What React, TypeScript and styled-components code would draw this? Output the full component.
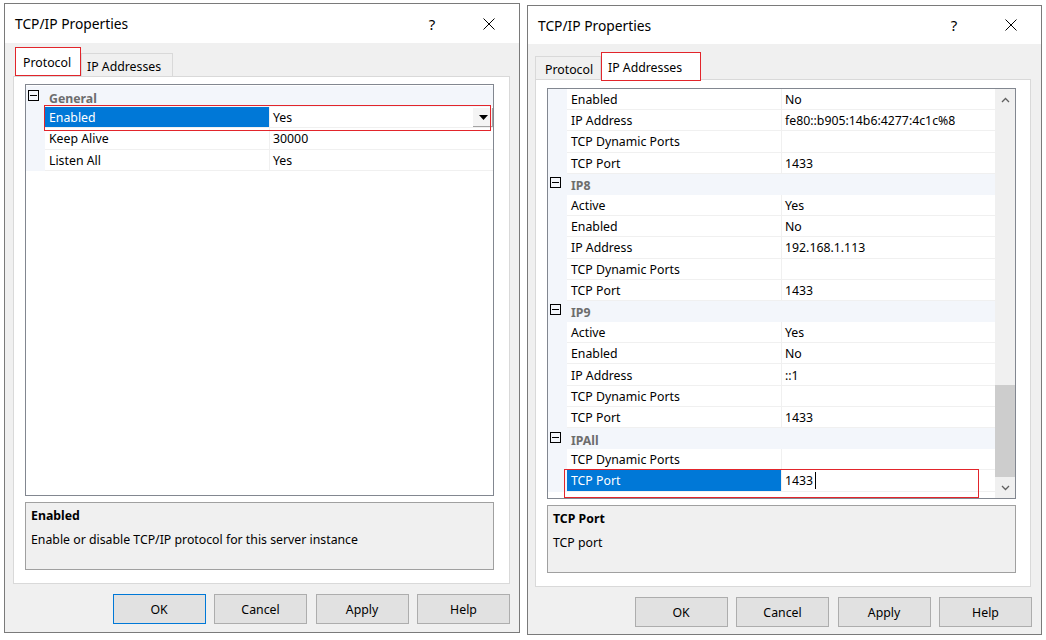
import React from "react";
import styled, { createGlobalStyle } from "styled-components";

const UI_FONT = `"Segoe UI", "Noto Sans", "Open Sans", sans-serif`;

const GlobalStyle = createGlobalStyle`
  *, *::before, *::after { box-sizing: border-box; }
  html, body { margin: 0; padding: 0; background: #ffffff; }
  body { font-family: ${UI_FONT}; font-size: 12.3px; color: #000000; }
`;

const Desktop = styled.div`
  display: flex;
  align-items: flex-start;
  width: 1046px;
  height: 640px;
  overflow: hidden;
`;

const Window = styled.section<{ $left: number; $top: number; $w: number }>`
  margin-left: ${(p) => p.$left}px;
  margin-top: ${(p) => p.$top}px;
  width: ${(p) => p.$w}px;
  height: 630px;
  flex: none;
  border: 1px solid #7a7a7a;
  background: #f0f0f0;
  display: flex;
  flex-direction: column;
`;

const TitleBar = styled.header<{ $h: number }>`
  height: ${(p) => p.$h}px;
  flex: none;
  background: #ffffff;
  display: flex;
  align-items: center;
  padding-left: 10px;
`;

const Title = styled.div`
  flex: 1;
  font-size: 13.8px;
  color: #000;
`;

const HelpGlyph = styled.div`
  width: 54px;
  text-align: center;
  font-size: 15px;
  color: #000;
`;

const CloseButton = styled.div`
  width: 60px;
  display: flex;
  align-items: center;
  justify-content: center;
`;

const TabStrip = styled.div<{ $h: number; $pad: number }>`
  height: ${(p) => p.$h}px;
  flex: none;
  display: flex;
  align-items: flex-end;
  padding-left: ${(p) => p.$pad}px;
`;

const Tab = styled.div<{
  $w: number;
  $padL: number;
  $active?: boolean;
  $marked?: boolean;
  $drop: number;
}>`
  position: relative;
  z-index: 1;
  width: ${(p) => p.$w}px;
  height: ${(p) => (p.$active ? 29 : 23)}px;
  margin-bottom: ${(p) => -p.$drop}px;
  border: 1px solid ${(p) => (p.$marked ? "#e2252b" : "#d9d9d9")};
  border-bottom: ${(p) => (p.$marked ? "1px solid #e2252b" : "none")};
  background: ${(p) => (p.$active ? "#ffffff" : "#f0f0f0")};
  display: flex;
  align-items: center;
  padding-left: ${(p) => p.$padL}px;
  padding-top: ${(p) => (p.$active ? 1 : 2)}px;
  white-space: nowrap;
`;

const Panel = styled.div<{ $margin: string; $pad: string }>`
  margin: ${(p) => p.$margin};
  height: 508px;
  flex: none;
  background: #ffffff;
  border: 1px solid #d9d9d9;
  padding: ${(p) => p.$pad};
  display: flex;
  flex-direction: column;
  gap: 6px;
`;

const Grid = styled.div`
  flex: 1;
  min-height: 0;
  border: 1px solid #828790;
  background: #ffffff;
  display: flex;
  overflow: hidden;
`;

const GridBody = styled.div<{ $padTop: number }>`
  flex: 1;
  min-width: 0;
  padding-top: ${(p) => p.$padTop}px;
`;

const ROW_H = 21.2;

const CategoryRow = styled.div`
  display: grid;
  grid-template-columns: 19px 1fr;
  height: ${ROW_H}px;
  background: #f3f6fb;
`;

const Expander = styled.div`
  padding: 3.5px 0 0 2px;
  line-height: 0;
`;

const CategoryLabel = styled.div`
  padding: 3px 0 0 4px;
  display: flex;
  align-items: center;
  font-weight: 700;
  color: #6d6d6d;
`;

const PropRow = styled.div`
  position: relative;
  display: grid;
  grid-template-columns: 19px 1fr 1fr;
  height: ${ROW_H}px;
`;

const Gutter = styled.div`
  background: #f3f6fb;
`;

const LabelCell = styled.div<{ $selected?: boolean }>`
  display: flex;
  align-items: center;
  padding: 1px 0 0 4px;
  border-bottom: 1px solid #f0f0f0;
  background: ${(p) => (p.$selected ? "#0078d7" : "#ffffff")};
  color: ${(p) => (p.$selected ? "#ffffff" : "#000000")};
  white-space: nowrap;
  overflow: hidden;
`;

const ValueCell = styled.div`
  display: flex;
  align-items: center;
  padding: 1px 0 0 3px;
  border-left: 1px solid #f0f0f0;
  border-bottom: 1px solid #f0f0f0;
  white-space: nowrap;
  overflow: hidden;
`;

const DropButton = styled.div`
  margin-left: auto;
  align-self: flex-start;
  width: 20px;
  height: 20px;
  background: #f4f4f4;
  box-shadow: inset -1px -2px 0 #a3a3a3;
  display: flex;
  align-items: center;
  justify-content: center;
  padding-bottom: 2px;
`;

const Caret = styled.span`
  display: inline-block;
  width: 1px;
  height: 17px;
  margin-left: 2px;
  background: #000000;
`;

const Highlight = styled.div<{ $inset: string }>`
  position: absolute;
  inset: ${(p) => p.$inset};
  border: 1px solid #e2252b;
  pointer-events: none;
  z-index: 2;
`;

const VScroll = styled.div`
  width: 20px;
  flex: none;
  background: #f0f0f0;
  display: flex;
  flex-direction: column;
`;

const ScrollArrow = styled.div`
  height: 21px;
  flex: none;
  display: flex;
  align-items: center;
  justify-content: center;
`;

const ScrollTrack = styled.div`
  flex: 1;
  display: flex;
  flex-direction: column;
  justify-content: flex-end;
`;

const ScrollThumb = styled.div<{ $h: number }>`
  height: ${(p) => p.$h}px;
  background: #cdcdcd;
`;

const Description = styled.div`
  height: 68px;
  flex: none;
  border: 1px solid #a0a0a0;
  background: #f0f0f0;
  padding: 4px 5px;
`;

const DescTitle = styled.div`
  font-weight: 700;
  line-height: 18px;
`;

const DescText = styled.div`
  margin-top: 6px;
  line-height: 18px;
`;

const ButtonRow = styled.div`
  display: flex;
  justify-content: flex-end;
  gap: 8.5px;
  margin-top: 10px;
  padding-right: 9px;
`;

const DlgButton = styled.button<{ $default?: boolean }>`
  width: 93px;
  height: 30px;
  padding: 0;
  font-family: ${UI_FONT};
  font-size: 12.3px;
  color: #000000;
  background: #e1e1e1;
  border: 1px solid ${(p) => (p.$default ? "#0078d7" : "#adadad")};
  outline: none;
`;

type Row =
  | { kind: "cat"; label: string }
  | {
      kind: "prop";
      label: string;
      value: string;
      selected?: boolean;
      editor?: "dropdown" | "text";
      mark?: string;
    };

interface TabDef {
  label: string;
  w: number;
  padL: number;
  active?: boolean;
  marked?: boolean;
  drop?: number;
}

interface DialogDef {
  left: number;
  top: number;
  w: number;
  titleH: number;
  stripH: number;
  stripPad: number;
  tabs: TabDef[];
  panelMargin: string;
  panelPad: string;
  gridPadTop: number;
  rows: Row[];
  thumb?: number;
  descTitle: string;
  descText: string;
  okDefault?: boolean;
}

const CloseIcon = () => (
  <svg width="12" height="12" viewBox="0 0 12 12">
    <path d="M0.5 0.5L11.5 11.5M11.5 0.5L0.5 11.5" stroke="#000" strokeWidth="1" fill="none" />
  </svg>
);

const MinusBox = () => (
  <svg width="11" height="11" viewBox="0 0 11 11">
    <rect x="0.5" y="0.5" width="10" height="10" fill="none" stroke="#000" strokeWidth="1" />
    <path d="M2 5.5H9" stroke="#000" strokeWidth="1" />
  </svg>
);

const DownTriangle = () => (
  <svg width="9" height="5" viewBox="0 0 9 5">
    <path d="M0 0H9L4.5 5Z" fill="#000" />
  </svg>
);

const Chevron = ({ up }: { up?: boolean }) => (
  <svg width="9" height="6" viewBox="0 0 9 6">
    <path
      d={up ? "M1 5L4.5 1.5L8 5" : "M1 1L4.5 4.5L8 1"}
      stroke="#606060"
      strokeWidth="1.3"
      fill="none"
    />
  </svg>
);

const Dialog = ({ d }: { d: DialogDef }) => (
  <Window $left={d.left} $top={d.top} $w={d.w}>
    <TitleBar $h={d.titleH}>
      <Title>TCP/IP Properties</Title>
      <HelpGlyph>?</HelpGlyph>
      <CloseButton>
        <CloseIcon />
      </CloseButton>
    </TitleBar>
    <TabStrip $h={d.stripH} $pad={d.stripPad}>
      {d.tabs.map((t) => (
        <Tab
          key={t.label}
          $w={t.w}
          $padL={t.padL}
          $active={t.active}
          $marked={t.marked}
          $drop={t.drop ?? 0}
        >
          {t.label}
        </Tab>
      ))}
    </TabStrip>
    <Panel $margin={d.panelMargin} $pad={d.panelPad}>
      <Grid>
        <GridBody $padTop={d.gridPadTop}>
          {d.rows.map((r, i) =>
            r.kind === "cat" ? (
              <CategoryRow key={i}>
                <Expander>
                  <MinusBox />
                </Expander>
                <CategoryLabel>{r.label}</CategoryLabel>
              </CategoryRow>
            ) : (
              <PropRow key={i}>
                <Gutter />
                <LabelCell $selected={r.selected}>{r.label}</LabelCell>
                <ValueCell>
                  {r.value}
                  {r.editor === "text" && <Caret />}
                  {r.editor === "dropdown" && (
                    <DropButton>
                      <DownTriangle />
                    </DropButton>
                  )}
                </ValueCell>
                {r.mark && <Highlight $inset={r.mark} />}
              </PropRow>
            )
          )}
        </GridBody>
        {d.thumb !== undefined && (
          <VScroll>
            <ScrollArrow>
              <Chevron up />
            </ScrollArrow>
            <ScrollTrack>
              <ScrollThumb $h={d.thumb} />
            </ScrollTrack>
            <ScrollArrow>
              <Chevron />
            </ScrollArrow>
          </VScroll>
        )}
      </Grid>
      <Description>
        <DescTitle>{d.descTitle}</DescTitle>
        <DescText>{d.descText}</DescText>
      </Description>
    </Panel>
    <ButtonRow>
      <DlgButton $default={d.okDefault}>OK</DlgButton>
      <DlgButton>Cancel</DlgButton>
      <DlgButton>Apply</DlgButton>
      <DlgButton>Help</DlgButton>
    </ButtonRow>
  </Window>
);

const p = (label: string, value: string): Row => ({ kind: "prop", label, value });
const c = (label: string): Row => ({ kind: "cat", label });

const protocolDialog: DialogDef = {
  left: 4,
  top: 3,
  w: 516,
  titleH: 39,
  stripH: 33,
  stripPad: 10,
  tabs: [
    { label: "Protocol", w: 66, padL: 7, active: true, marked: true },
    { label: "IP Addresses", w: 92, padL: 5 },
  ],
  panelMargin: "0 9px 0 8px",
  panelPad: "7px 15px 13px 11px",
  gridPadTop: 1,
  rows: [
    c("General"),
    {
      kind: "prop",
      label: "Enabled",
      value: "Yes",
      selected: true,
      editor: "dropdown",
      mark: "-2px 2px -3px 18px",
    },
    p("Keep Alive", "30000"),
    p("Listen All", "Yes"),
  ],
  descTitle: "Enabled",
  descText: "Enable or disable TCP/IP protocol for this server instance",
  okDefault: true,
};

const addressesDialog: DialogDef = {
  left: 7,
  top: 5,
  w: 515,
  titleH: 38,
  stripH: 35,
  stripPad: 7,
  tabs: [
    { label: "Protocol", w: 66, padL: 9 },
    { label: "IP Addresses", w: 100, padL: 6, active: true, marked: true, drop: 2 },
  ],
  panelMargin: "0 10px 0 7px",
  panelPad: "8px 14px 13px 11px",
  gridPadTop: 0,
  rows: [
    p("Enabled", "No"),
    p("IP Address", "fe80::b905:14b6:4277:4c1c%8"),
    p("TCP Dynamic Ports", ""),
    p("TCP Port", "1433"),
    c("IP8"),
    p("Active", "Yes"),
    p("Enabled", "No"),
    p("IP Address", "192.168.1.113"),
    p("TCP Dynamic Ports", ""),
    p("TCP Port", "1433"),
    c("IP9"),
    p("Active", "Yes"),
    p("Enabled", "No"),
    p("IP Address", "::1"),
    p("TCP Dynamic Ports", ""),
    p("TCP Port", "1433"),
    c("IPAll"),
    p("TCP Dynamic Ports", ""),
    {
      kind: "prop",
      label: "TCP Port",
      value: "1433",
      selected: true,
      editor: "text",
      mark: "-1px 16px -6px 16px",
    },
  ],
  thumb: 92,
  descTitle: "TCP Port",
  descText: "TCP port",
};

export default function App() {
  return (
    <>
      <GlobalStyle />
      <Desktop>
        <Dialog d={protocolDialog} />
        <Dialog d={addressesDialog} />
      </Desktop>
    </>
  );
}
